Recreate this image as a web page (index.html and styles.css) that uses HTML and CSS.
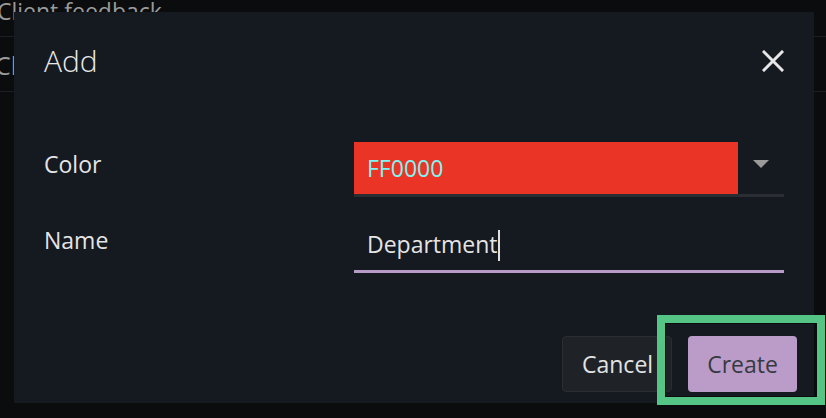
FILE: index.html
```html
<!DOCTYPE html>
<html>
<head>
<meta charset="utf-8">
<link rel="stylesheet" href="styles.css">
</head>
<body>
<div class="list">
  <div class="row first">Client feedback</div>
  <div class="row second">Client</div>
</div>

<div class="dialog">
  <div class="header">
    <div class="title">Add</div>
    <svg class="close" width="22" height="22" viewBox="0 0 22 22">
      <path d="M2 2 L20 20 M20 2 L2 20" stroke="#e6e6e6" stroke-width="3" stroke-linecap="square" fill="none"/>
    </svg>
  </div>
  <div class="form">
    <div class="label">Color</div>
    <div class="select">
      <div class="swatch">FF0000</div>
      <div class="arrow">
        <svg width="16" height="8" viewBox="0 0 16 8"><path d="M0 0 H16 L8 8 Z" fill="#9a9a9a"/></svg>
      </div>
    </div>
    <div class="label">Name</div>
    <div class="input"><span class="value">Department</span><span class="caret"></span></div>
  </div>
  <div class="footer">
    <button class="btn cancel">Cancel</button>
    <button class="btn create">Create</button>
  </div>
</div>

<div class="highlight"></div>
</body>
</html>
```

FILE: styles.css
```css
html, body {
  margin: 0;
  padding: 0;
}
body {
  width: 826px;
  height: 418px;
  overflow: hidden;
  background: #0b0c0e;
  font-family: "Open Sans", "Noto Sans", sans-serif;
  position: relative;
}
.row {
  border-bottom: 1px solid #1c1f23;
  color: #9a9a9a;
  white-space: nowrap;
}
.first {
  height: 36px;
  font-size: 23px;
  line-height: 22px;
  margin-left: -3px;
}
.second {
  height: 54px;
  font-size: 25px;
  line-height: 57px;
  margin-left: -5px;
}
.dialog {
  position: absolute;
  left: 14px;
  top: 12px;
  width: 800px;
  height: 391px;
  background: #151920;
  box-sizing: border-box;
  padding-top: 29px;
}
.header {
  display: flex;
  align-items: center;
  justify-content: space-between;
  padding: 0 30px;
  height: 40px;
}
.title {
  font-size: 30px;
  font-weight: 300;
  line-height: 40px;
  color: #e8e8e8;
}
.close {
  display: block;
}
.form {
  display: grid;
  grid-template-columns: 310px 430px;
  row-gap: 21px;
  padding: 0 30px;
  margin-top: 61px;
}
.label {
  font-size: 23px;
  line-height: 44px;
  color: #e4e4e4;
}
.select {
  display: flex;
  height: 52px;
  border-bottom: 3px solid #2a2e33;
}
.swatch {
  width: 384px;
  background: #e93426;
  color: #80f4f2;
  font-size: 23px;
  line-height: 52px;
  padding-left: 13px;
  box-sizing: border-box;
}
.arrow {
  flex: 1;
  display: flex;
  justify-content: center;
  align-items: center;
  padding-bottom: 9px;
}
.arrow svg {
  display: block;
}
.input {
  display: flex;
  align-items: center;
  height: 52px;
  border-bottom: 3px solid #b89ac8;
  padding-left: 13px;
  font-size: 23px;
  line-height: 52px;
  color: #e4e4e4;
}
.caret {
  width: 2px;
  height: 31px;
  background: #e0e0e0;
  margin-top: 2px;
}
.footer {
  display: flex;
  justify-content: flex-end;
  gap: 16px;
  padding: 0 17px;
  margin-top: 63px;
}
.btn {
  height: 56px;
  padding: 0 19px;
  border-radius: 4px;
  font-family: "Open Sans", "Noto Sans", sans-serif;
  font-size: 23px;
  cursor: pointer;
}
.cancel {
  background: #1f2327;
  border: 1px solid #2a2e33;
  color: #e2e2e2;
  width: 110px;
}
.create {
  background: #bb9cc9;
  border: none;
  color: #363a40;
  width: 109px;
}
.highlight {
  position: absolute;
  left: 657px;
  top: 315px;
  width: 168px;
  height: 90px;
  box-sizing: border-box;
  border: 8px solid #55c586;
  box-shadow: inset 0 0 0 1px #0b0c0e;
}
```
